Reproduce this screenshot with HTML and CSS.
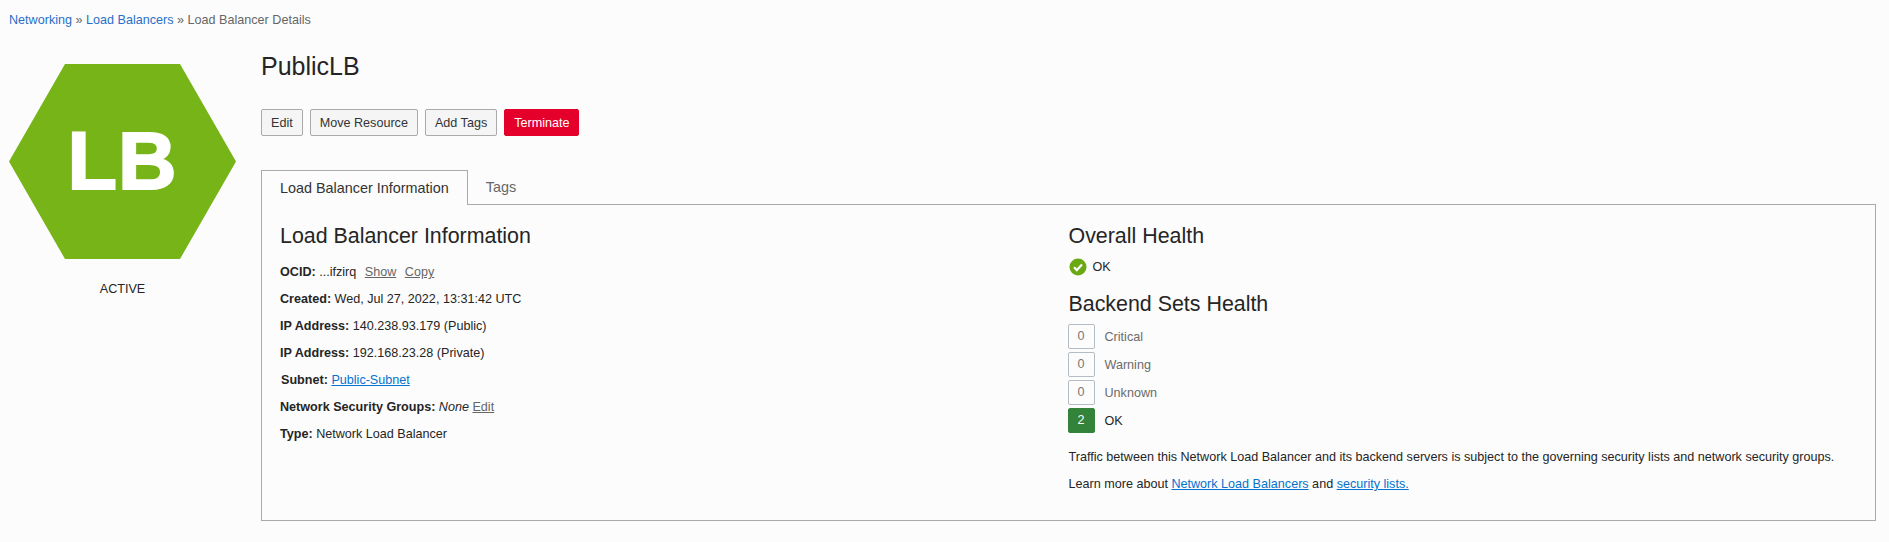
FILE: index.html
```html
<!DOCTYPE html>
<html lang="en">
<head>
<meta charset="utf-8">
<title>Load Balancer Details</title>
<link rel="stylesheet" href="styles.css">
</head>
<body>
<nav class="crumbs"><a href="#">Networking</a> <span class="sep">»</span> <a href="#">Load Balancers</a> <span class="sep">»</span> <span class="here">Load Balancer Details</span></nav>
<div class="page">
  <aside class="side">
    <div class="hex">
      <svg class="hex-bg" width="229" height="195" viewBox="0 0 229 195"><polygon points="57,0 172,0 228,97.5 172,195 57,195 1,97.5" fill="#76b418"/></svg>
      <span class="hex-text">LB</span>
    </div>
    <div class="status">ACTIVE</div>
  </aside>
  <main class="main">
    <h1 class="title">PublicLB</h1>
    <div class="actions">
      <button class="btn">Edit</button>
      <button class="btn">Move Resource</button>
      <button class="btn">Add Tags</button>
      <button class="btn danger">Terminate</button>
    </div>
    <div class="tabs">
      <div class="tab active">Load Balancer Information</div>
      <div class="tab">Tags</div>
      <div class="tab-fill"></div>
    </div>
    <section class="panel">
      <div class="col">
        <h2 class="h">Load Balancer Information</h2>
        <div class="row"><b>OCID:</b> ...ifzirq <a class="mut first" href="#">Show</a> <a class="mut" href="#">Copy</a></div>
        <div class="row"><b>Created:</b> Wed, Jul 27, 2022, 13:31:42 UTC</div>
        <div class="row"><b>IP Address:</b> 140.238.93.179 (Public)</div>
        <div class="row"><b>IP Address:</b> 192.168.23.28 (Private)</div>
        <div class="row subnet"><b>Subnet:</b> <a class="link" href="#">Public-Subnet</a></div>
        <div class="row"><b>Network Security Groups:</b> <i>None</i> <a class="mut" href="#">Edit</a></div>
        <div class="row"><b>Type:</b> Network Load Balancer</div>
      </div>
      <div class="col">
        <h2 class="h">Overall Health</h2>
        <div class="overall">
          <svg width="18" height="18" viewBox="0 0 18 18"><circle cx="9" cy="9" r="8.5" fill="#6aa814"/><path d="M5 9.3l2.8 2.8L13 6.6" fill="none" stroke="#fff" stroke-width="2.2"/></svg>
          <span>OK</span>
        </div>
        <h2 class="h h2">Backend Sets Health</h2>
        <ul class="health">
          <li><span class="badge">0</span><span class="lbl">Critical</span></li>
          <li><span class="badge">0</span><span class="lbl">Warning</span></li>
          <li><span class="badge">0</span><span class="lbl">Unknown</span></li>
          <li><span class="badge ok">2</span><span class="lbl dark">OK</span></li>
        </ul>
        <p class="note">Traffic between this Network Load Balancer and its backend servers is subject to the governing security lists and network security groups.</p>
        <p class="note">Learn more about <a class="link" href="#">Network Load Balancers</a> and <a class="link" href="#">security lists.</a></p>
      </div>
    </section>
  </main>
</div>
</body>
</html>
```
FILE: styles.css
```css
* { box-sizing: border-box; }
html, body { margin: 0; padding: 0; }
body {
  background: #fcfcfc;
  color: #252525;
  font-family: "Liberation Sans", Arial, sans-serif;
  font-size: 12.6px;
  height: 542px;
  overflow: hidden;
}
a { text-decoration: none; }
.crumbs { padding: 13px 0 0 9px; line-height: 14px; font-size: 12.6px; height: 26px; }
.crumbs a { color: #2a6fc9; }
.crumbs .sep, .crumbs .here { color: #666; }
.page { display: flex; padding: 38px 13px 0 8px; gap: 24px; }
.side { width: 229px; flex: none; }
.hex { position: relative; width: 229px; height: 195px; display: flex; align-items: center; justify-content: center; }
.hex-bg { position: absolute; left: 0; top: 0; }
.hex-text { position: relative; color: #fff; font-weight: 700; font-size: 81px; line-height: 1; letter-spacing: 1px; -webkit-text-stroke: 2px #fff; }
.status { text-align: center; margin-top: 23px; line-height: 14px; color: #252525; }
.main { flex: 1; min-width: 0; margin-top: -13px; }
.title { margin: 0; font-size: 25px; font-weight: 400; line-height: 30px; height: 58px; }
.actions { display: flex; gap: 7px; }
.btn {
  height: 27px; padding: 0 9px; font: 12.6px "Liberation Sans", Arial, sans-serif;
  color: #333; background: #f5f5f6; border: 1px solid #aaa; border-radius: 2px; min-width: 41px;
}
.btn.danger { background: #e4002b; border-color: #e4002b; color: #fff; }
.tabs { display: flex; margin-top: 34px; height: 35px; }
.tab { padding: 0 18px; line-height: 34px; font-size: 14.4px; color: #666; border-bottom: 1px solid #aaa; }
.tab.active { color: #333; border: 1px solid #aaa; border-bottom: 0; background: #fcfcfc; }
.tab-fill { flex: 1; border-bottom: 1px solid #aaa; }
.panel {
  display: grid; grid-template-columns: 1fr 1fr; height: 316px;
  padding: 18px 18px 0; border: 1px solid #aaa; border-top: 0;
}
.h { margin: 0; font-size: 21.4px; font-weight: 400; line-height: 26px; color: #252525; }
.row { height: 27px; line-height: 27px; }
.col > .h + .row { margin-top: 10px; }
.mut { color: #666; text-decoration: underline; }
.mut.first { margin-left: 5px; margin-right: 5px; }
.link { color: #0572ce; text-decoration: underline; }
.subnet { padding-left: 1px; }
.overall { display: flex; align-items: center; gap: 6px; margin-top: 9px; height: 18px; }
.h2 { margin-top: 15px; }
.health { list-style: none; margin: 7px 0 0 -1px; padding: 0; display: flex; flex-direction: column; gap: 3px; }
.health li { display: flex; align-items: center; gap: 10px; height: 25px; }
.badge { width: 27px; height: 25px; line-height: 23px; text-align: center; border: 1px solid #b5bcc4; border-radius: 2px; color: #777; }
.badge.ok { background: #33833a; border-color: #33833a; color: #fff; }
.lbl { color: #6b6b6b; }
.lbl.dark { color: #252525; }
.note { margin: 0; line-height: 27px; }
.health + .note { margin-top: 11px; }
```
